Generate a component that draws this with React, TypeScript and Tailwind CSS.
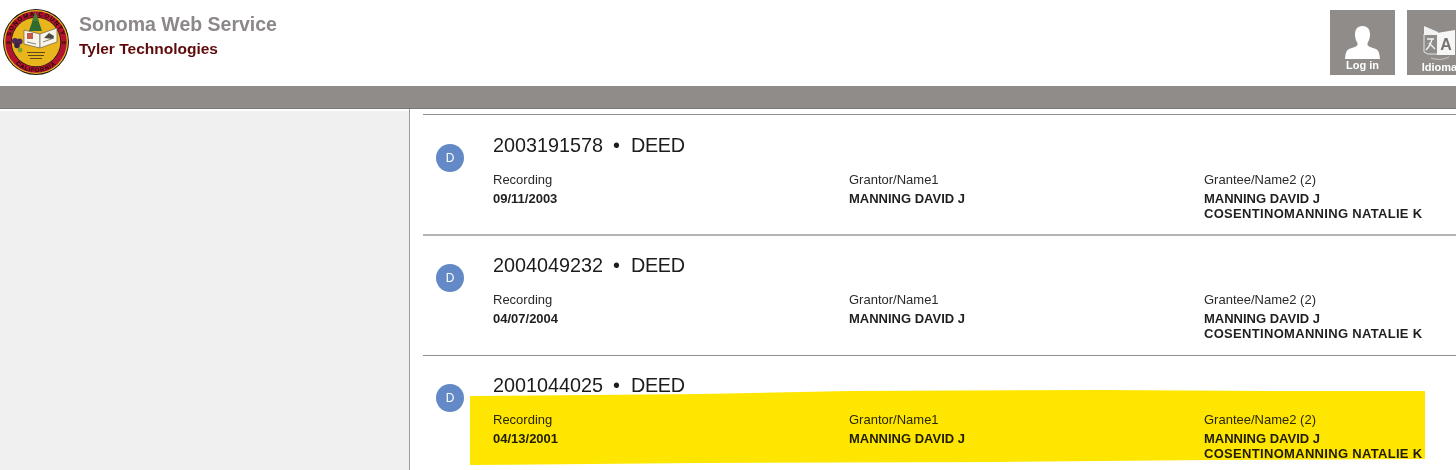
import React from "react";

function Seal() {
  return (
    <svg width="68" height="68" viewBox="0 0 68 68" className="block">
      <defs>
        <path id="sealTop" d="M8 34 A26 26 0 0 1 60 34" />
        <path id="sealBottom" d="M4 34 A30 30 0 0 0 64 34" />
      </defs>
      <circle cx="34" cy="34" r="33" fill="#1c1410" />
      <circle cx="34" cy="34" r="32" fill="#e6b422" />
      <circle cx="34" cy="34" r="30.8" fill="#b3122f" />
      <circle cx="34" cy="34" r="25" fill="#1c1410" />
      <circle cx="34" cy="34" r="24.3" fill="#e9b51c" />
      <text fontSize="6.2" fontWeight="700" fill="#120c06" fontFamily="'Liberation Sans', sans-serif" letterSpacing="1.1">
        <textPath href="#sealTop" startOffset="50%" textAnchor="middle">SONOMA COUNTY</textPath>
      </text>
      <text fontSize="6" fontWeight="700" fill="#120c06" fontFamily="'Liberation Sans', sans-serif" letterSpacing="0.8">
        <textPath href="#sealBottom" startOffset="50%" textAnchor="middle">CALIFORNIA</textPath>
      </text>
      <path d="M33.5 4 L27 23 L40 23 Z" fill="#2f6a30" />
      <path d="M33.5 4 L30 13 L37 13 Z" fill="#437f38" />
      <path d="M22 22 L38 26 L38 40 L22 36 Z" fill="#f6f3e8" stroke="#5a4f3a" strokeWidth="0.6" />
      <path d="M38 26 L55 20 L55 34 L38 40 Z" fill="#f6f3e8" stroke="#5a4f3a" strokeWidth="0.6" />
      <path d="M25 25 h6 v6 h-6 z" fill="#c25a4a" />
      <path d="M42 30 l5 -5 l5 3 l-1 3 z" fill="#4a4a42" />
      <path d="M41 34 l11 -4" stroke="#6a6a60" strokeWidth="0.8" />
      <path d="M25 34 l9 2" stroke="#6a6a60" strokeWidth="0.8" />
      <circle cx="13" cy="33" r="3" fill="#4a2a55" />
      <circle cx="17.5" cy="33.5" r="3" fill="#4a2a55" />
      <circle cx="15" cy="37.5" r="2.8" fill="#3c2348" />
      <circle cx="18" cy="42" r="2.4" fill="#7ba32e" />
      <rect x="25" y="44" width="18" height="1" fill="#5b4616" />
      <rect x="26" y="47" width="16" height="1" fill="#5b4616" />
      <rect x="28" y="50" width="12" height="1" fill="#5b4616" />
      <text x="4" y="36" fontSize="4" fontWeight="700" fill="#120c06" fontFamily="'Liberation Sans', sans-serif">18</text>
      <text x="59.5" y="36" fontSize="4" fontWeight="700" fill="#120c06" fontFamily="'Liberation Sans', sans-serif">50</text>
    </svg>
  );
}

function UserGlyph() {
  return (
    <svg width="35" height="33" viewBox="0 0 35 33" className="block">
      <path
        fill="#fff"
        d="M17.5 0 C12 0 10 4 10 8.5 C10 12 11 15 12.5 17 L12.5 18.5 C12.5 20.5 8 21.5 4 23 C1 24.5 0.5 28 0 33 L35 33 C34.5 28 34 24.5 31 23 C27 21.5 22.5 20.5 22.5 18.5 L22.5 17 C24 15 25 12 25 8.5 C25 4 23 0 17.5 0 Z"
      />
    </svg>
  );
}

function TranslateGlyph() {
  return (
    <svg width="33" height="35" viewBox="0 0 33 35" className="block">
      <path d="M1 8 L15 8 L15 28 L5 28 L1 26 Z" fill="none" stroke="#e4e4e4" strokeWidth="1" />
      <path d="M1 0 L15 6 L15 9 L1 9 Z" fill="#f2f2f2" />
      <path d="M14 7 L32 4 L32 29 L14 29 Z" fill="#f6f6f6" />
      <text x="23" y="24" textAnchor="middle" fontSize="16" fontWeight="700" fill="#77736f" fontFamily="'Liberation Sans', sans-serif">A</text>
      <path d="M4 13 L11 13 M9 13 C8 18 6 21 3 24 M6 17 L12 23" fill="none" stroke="#f4f4f4" strokeWidth="1.3" />
      <path d="M8 32 C14 34 20 34 26 31" fill="none" stroke="#d8d8d8" strokeWidth="0.8" />
    </svg>
  );
}

function HeaderButton({ label, children }: { label: string; children: React.ReactNode }) {
  return (
    <div className="flex h-[65px] w-[65px] shrink-0 flex-col items-center bg-[#8f8c8a] pt-[16px]">
      {children}
      <span className="text-[11px] font-bold leading-[13px] text-white">{label}</span>
    </div>
  );
}

function Column({ label, lines, w }: { label: string; lines: string[]; w: string }) {
  return (
    <div className={w}>
      <div className="text-[13px] leading-[16px] text-[#2a2a2a]">{label}</div>
      <div className="mt-[3px] text-[13px] font-bold leading-[15px] text-[#1f1f1f]">
        {lines.map((l) => (
          <div key={l} className={l.length > 20 ? "tracking-[0.31px]" : ""}>
            {l}
          </div>
        ))}
      </div>
    </div>
  );
}

function Row({ id, date, frame }: { id: string; date: string; frame: string }) {
  return (
    <div className={`flex pl-[13px] ${frame}`}>
      <div className="mt-[11px] flex h-[28px] w-[28px] shrink-0 items-center justify-center rounded-full bg-[#6389c7] text-[12px] text-white">
        D
      </div>
      <div className="ml-[29px] flex-1">
        <div className="flex h-[24px] items-center text-[19.8px] leading-[24px] text-[#1c1c1c]">
          <span>{id}</span>
          <span className="ml-[10px] mr-[11px]">•</span>
          <span className="tracking-[-0.3px]">DEED</span>
        </div>
        <div className="mt-[15px] flex">
          <Column w="w-[356px] shrink-0" label="Recording" lines={[date]} />
          <Column w="w-[355px] shrink-0" label="Grantor/Name1" lines={["MANNING DAVID J"]} />
          <Column w="flex-1" label="Grantee/Name2 (2)" lines={["MANNING DAVID J", "COSENTINOMANNING NATALIE K"]} />
        </div>
      </div>
    </div>
  );
}

export default function App() {
  return (
    <div className="relative h-[470px] w-[1456px] overflow-hidden bg-white font-['Liberation_Sans',Arial,sans-serif]">
      <header className="flex h-[86px] bg-white">
        <div className="ml-[2px] mt-[8px] shrink-0">
          <Seal />
        </div>
        <div className="ml-[9px] mt-[13px]">
          <div className="text-[19.5px] font-bold leading-[23px] text-[#8c8888]">Sonoma Web Service</div>
          <div className="mt-[4px] text-[15.5px] font-bold leading-[18px] text-[#5e0a0a]">Tyler Technologies</div>
        </div>
        <div className="ml-auto mr-[-16px] mt-[10px] flex gap-[12px]">
          <HeaderButton label="Log in">
            <UserGlyph />
          </HeaderButton>
          <HeaderButton label="Idioma">
            <TranslateGlyph />
          </HeaderButton>
        </div>
      </header>
      <div className="h-[23px] border-b border-[#7c7a78] bg-[#8f8c8a]" />
      <div className="flex h-[361px]">
        <aside className="w-[410px] shrink-0 border-r border-[#9a9a9a] pt-[2px]">
          <div className="h-full bg-[#f0f0f0]" />
        </aside>
        <main className="flex-1 pl-[13px] pt-[5px]">
          <Row id="2003191578" date="09/11/2003" frame="h-[120px] border-t border-[#8f8f8f] pt-[18px]" />
          <Row id="2004049232" date="04/07/2004" frame="h-[121px] border-t-2 border-[#b4b4b4] pt-[17px]" />
          <Row id="2001044025" date="04/13/2001" frame="h-[115px] border-t border-[#8f8f8f] pt-[17px]" />
        </main>
      </div>
      <svg
        className="pointer-events-none absolute left-0 top-0 mix-blend-multiply"
        width="1456"
        height="470"
        viewBox="0 0 1456 470"
      >
        <path
          fill="#ffe600"
          d="M470 396 L700 394 L850 391 L1100 390 L1270 391 L1425 391 L1425 459 L1210 460 L1000 462 L700 463 L470 465 Z"
        />
      </svg>
    </div>
  );
}
